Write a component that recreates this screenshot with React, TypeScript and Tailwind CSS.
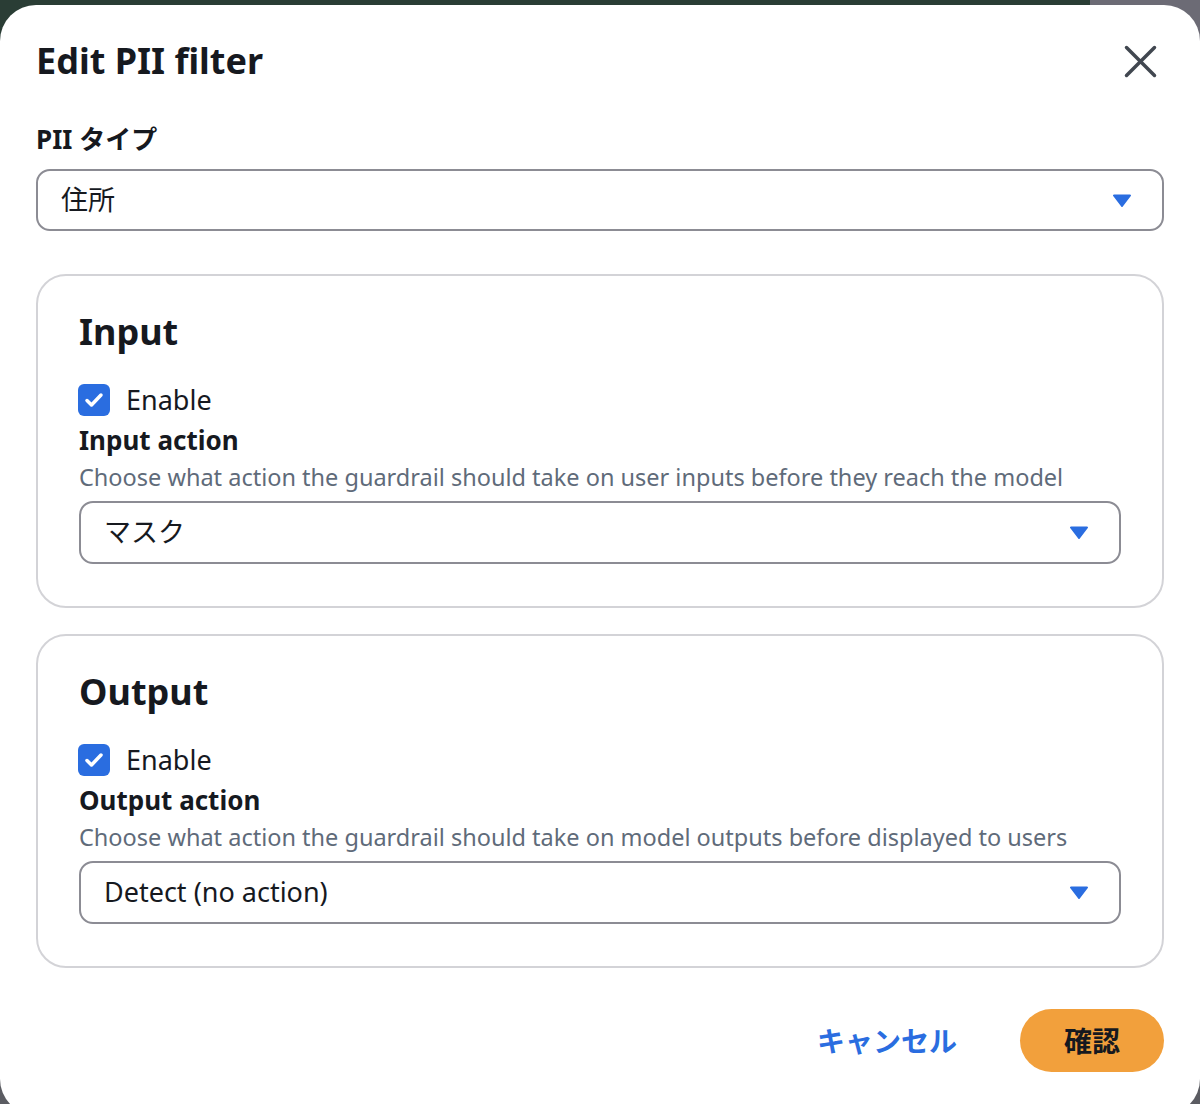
import { useState } from 'react';

const font = "font-['Noto_Sans','Noto_Sans_CJK_JP',sans-serif]";

const Arrow = () => (
  <svg width="20" height="15" viewBox="0 0 20 15" className="shrink-0">
    <path d="M2 1.5h16a1 1 0 0 1 .8 1.6l-8 10.4a1 1 0 0 1-1.6 0l-8-10.4A1 1 0 0 1 2 1.5z" fill="#2a6de0" />
  </svg>
);

interface SelectBoxProps {
  value: string;
  className?: string;
}

const SelectBox = ({ value, className = '' }: SelectBoxProps) => (
  <div
    className={`flex items-center justify-between border-2 border-[#8c8c94] rounded-[14px] pl-[23px] pr-[30px] text-[27px] text-[#16191f] ${className}`}
  >
    <span>{value}</span>
    <Arrow />
  </div>
);

const CheckIcon = () => (
  <svg width="24" height="24" viewBox="0 0 24 24">
    <path d="M5 12.5l4.5 4.5L19 7" fill="none" stroke="white" strokeWidth="3.5" strokeLinecap="round" strokeLinejoin="round" />
  </svg>
);

interface SectionProps {
  title: string;
  actionLabel: string;
  description: string;
  value: string;
}

const Section = ({ title, actionLabel, description, value }: SectionProps) => {
  const [enabled, setEnabled] = useState(true);

  return (
    <div className="border-2 border-[#d3d3d7] rounded-[30px] pl-[41px] pr-[41px] pt-[34px] pb-[42px]">
      <h2 className="text-[36px] font-bold leading-[44px] text-[#16191f]">{title}</h2>
      <label className="flex items-center gap-[16px] mt-[28px] h-[36px] cursor-pointer">
        <button
          type="button"
          onClick={() => setEnabled(!enabled)}
          className={`-ml-[1px] flex items-center justify-center w-[32px] h-[32px] rounded-[6px] ${enabled ? 'bg-[#2a6de0]' : 'border-2 border-[#8c8c94] bg-white'}`}
        >
          {enabled && <CheckIcon />}
        </button>
        <span className="text-[27px] text-[#16191f]">Enable</span>
      </label>
      <div className="mt-[4px] text-[26px] font-bold leading-[36px] text-[#16191f]">{actionLabel}</div>
      <p className="mt-[3px] text-[23.5px] leading-[32px] text-[#5f6b7a]">{description}</p>
      <SelectBox value={value} className="mt-[8px] h-[63px]" />
    </div>
  );
};

const App = () => {
  return (
    <div
      className={`${font} h-[1104px] overflow-hidden bg-[linear-gradient(to_bottom,transparent_50%,#5b5c62_50%),linear-gradient(to_right,#2a3d35_1090px,#6c6b75_1090px)]`}
    >
      <div className="mt-[5px] h-[1110px] bg-white rounded-[36px] px-[36px] pt-[24px]">
        <div className="flex items-center justify-between h-[64px]">
          <h1 className="text-[36px] font-bold text-[#16191f]">Edit PII filter</h1>
          <button type="button" className="mr-[7px]">
            <svg width="33" height="33" viewBox="0 0 33 33">
              <path d="M2.5 2.5l28 28M30.5 2.5l-28 28" stroke="#414750" strokeWidth="3.5" strokeLinecap="round" />
            </svg>
          </button>
        </div>

        <div className="mt-[28px] text-[26px] font-bold leading-[36px] text-[#16191f]">PII タイプ</div>
        <SelectBox value="住所" className="mt-[12px] h-[62px]" />

        <div className="mt-[43px] flex flex-col gap-[26px]">
          <Section
            title="Input"
            actionLabel="Input action"
            description="Choose what action the guardrail should take on user inputs before they reach the model"
            value="マスク"
          />
          <Section
            title="Output"
            actionLabel="Output action"
            description="Choose what action the guardrail should take on model outputs before displayed to users"
            value="Detect (no action)"
          />
        </div>

        <div className="mt-[41px] flex items-center justify-end gap-[63px]">
          <button type="button" className="text-[28px] font-bold text-[#2a6de0]">キャンセル</button>
          <button
            type="button"
            className="w-[144px] h-[63px] rounded-full bg-[#f2a03c] text-[28px] font-bold text-[#16191f]"
          >
            確認
          </button>
        </div>
      </div>
    </div>
  );
};

export default App;
